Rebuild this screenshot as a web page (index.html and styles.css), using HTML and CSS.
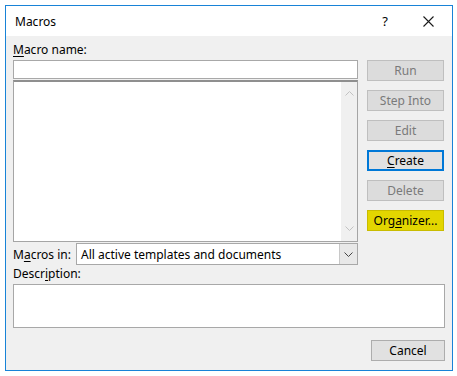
FILE: index.html
```html
<!DOCTYPE html>
<html>
<head>
    <title>Macros</title>
    <link rel="stylesheet" href="styles.css">
</head>
<body>
    <div class="dialog">
        <div class="titlebar">
            <span class="title">Macros</span>
            <span class="help">?</span>
            <svg class="close" width="11" height="11" viewBox="0 0 11 11">
                <path d="M0.5 0.5 L10.5 10.5 M10.5 0.5 L0.5 10.5" stroke="#1a1a1a" stroke-width="1.1" fill="none"/>
            </svg>
        </div>

        <div class="content">
            <div class="top">
                <div class="left">
                    <div class="label"><u>M</u>acro name:</div>
                    <div class="textbox"></div>
                    <div class="listbox">
                        <div class="scrollbar">
                            <svg width="9" height="5" viewBox="0 0 9 5"><path d="M0.5 4.5 L4.5 0.5 L8.5 4.5" stroke="#c2c2c2" fill="none"/></svg>
                            <svg width="9" height="5" viewBox="0 0 9 5"><path d="M0.5 0.5 L4.5 4.5 L8.5 0.5" stroke="#c2c2c2" fill="none"/></svg>
                        </div>
                    </div>
                    <div class="macros-in">
                        <span class="label">M<u>a</u>cros in:</span>
                        <div class="combo">
                            <span class="combo-text">All active templates and documents</span>
                            <span class="combo-btn">
                                <svg width="9" height="5" viewBox="0 0 9 5"><path d="M0.5 0.5 L4.5 4.5 L8.5 0.5" stroke="#444" fill="none"/></svg>
                            </span>
                        </div>
                    </div>
                </div>

                <div class="buttons">
                    <button class="btn disabled">Run</button>
                    <button class="btn disabled">Step Into</button>
                    <button class="btn disabled">Edit</button>
                    <button class="btn default"><u>C</u>reate</button>
                    <button class="btn disabled">Delete</button>
                    <button class="btn highlight">Org<u>a</u>nizer...</button>
                </div>
            </div>

            <div class="label desc-label">Descr<u>i</u>ption:</div>
            <div class="description"></div>

            <div class="footer">
                <button class="btn">Cancel</button>
            </div>
        </div>
    </div>
</body>
</html>
```

FILE: styles.css
```css
body {
    margin: 0;
    padding: 5px;
    background: #ffffff;
    font-family: "Noto Sans", "Open Sans", sans-serif;
    font-size: 12px;
    color: #000;
}
u {
    text-decoration-thickness: 1px;
    text-underline-offset: 2px;
}
.dialog {
    width: 448px;
    height: 366px;
    box-sizing: border-box;
    border: 1px solid #1883d7;
    background: #f0f0f0;
}
.titlebar {
    height: 30px;
    background: #ffffff;
    display: flex;
    align-items: center;
    padding: 0 18px 0 9px;
}
.title {
    font-size: 12px;
    flex: 1;
    padding-top: 1px;
}
.help {
    font-size: 13px;
    margin-right: 35px;
}
.content {
    padding: 6px 7px 0 7px;
}
.top {
    display: flex;
    gap: 9px;
}
.left {
    width: 345px;
}
.label {
    height: 18px;
    line-height: 15px;
}
.textbox {
    height: 19px;
    box-sizing: border-box;
    background: #fff;
    border: 1px solid #a8a8a8;
}
.listbox {
    margin-top: 1px;
    height: 162px;
    box-sizing: border-box;
    background: #fff;
    border: 1px solid #a5a5a5;
    border-top: 2px solid #8f8f8f;
    display: flex;
    justify-content: flex-end;
}
.scrollbar {
    width: 16px;
    background: #f0f0f0;
    display: flex;
    flex-direction: column;
    justify-content: space-between;
    align-items: center;
    padding: 9px 0 10px;
}
.macros-in {
    margin-top: 1px;
    display: flex;
    align-items: center;
    height: 22px;
}
.macros-in .label {
    width: 63px;
    height: auto;
}
.combo {
    flex: 1;
    height: 22px;
    box-sizing: border-box;
    background: #fff;
    border: 1px solid #a8a8a8;
    display: flex;
    align-items: center;
}
.combo-text {
    flex: 1;
    padding-left: 4px;
}
.combo-btn {
    width: 17px;
    height: 20px;
    background: #e8e8e8;
    border-left: 1px solid #c8c8c8;
    display: flex;
    align-items: center;
    justify-content: center;
}
.buttons {
    padding-top: 18px;
    display: flex;
    flex-direction: column;
    gap: 9px;
}
.btn {
    width: 77px;
    height: 21px;
    box-sizing: border-box;
    font-family: inherit;
    font-size: 12px;
    padding: 0;
    background: #e1e1e1;
    border: 1px solid #adadad;
    color: #000;
}
.btn.disabled {
    background: #dcdcdc;
    border-color: #bfbfbf;
    color: #7a7a7a;
}
.btn.default {
    border: 2px solid #0078d7;
}
.btn.highlight {
    background: #e3d600;
    border-color: #c9bc00;
}
.desc-label {
    margin-top: 1px;
}
.description {
    height: 44px;
    box-sizing: border-box;
    background: #fff;
    border: 1px solid #a8a8a8;
}
.footer {
    margin-top: 12px;
    display: flex;
    justify-content: flex-end;
}
.footer .btn {
    width: 74px;
}
```
